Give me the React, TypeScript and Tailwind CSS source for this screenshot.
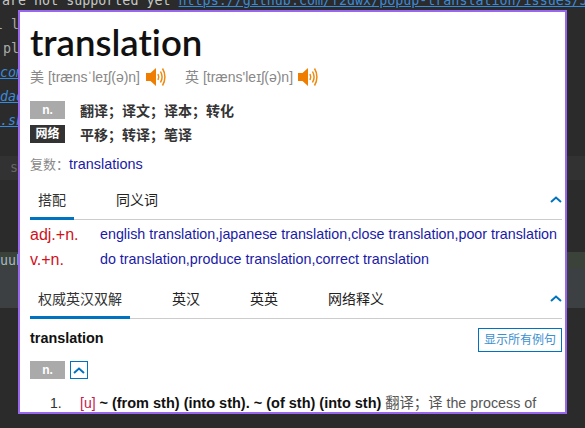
import { useState } from "react";

const sans = "font-['Liberation_Sans','Noto_Sans_CJK_SC',sans-serif]";

function Speaker() {
  return (
    <svg width="20" height="20" viewBox="0 0 20 20" className="shrink-0">
      <path d="M0 6h4.500L10 1v18l-5.500-5H0z" fill="#ee7d00" />
      <g fill="none" stroke="#ee8a10" strokeWidth="1.500">
        <path d="M12 7c1 2 1 4 0 6" />
        <path d="M14.500 4.500c1.900 3.300 1.900 7.700 0 11" />
        <path d="M16.500 1.500c3.200 5 3.200 12 0 17" />
      </g>
    </svg>
  );
}

function Chevron({ raised }: { raised?: boolean }) {
  return (
    <svg width="12" height="7" viewBox="0 0 12 7" className={raised ? "mb-[4px]" : ""}>
      <path d="M1 6l5-4.500L11 6" fill="none" stroke="#0073c0" strokeWidth="2" />
    </svg>
  );
}

function Tabs({ items, active }: { items: string[]; active: number }) {
  return (
    <div className="flex items-center justify-between border-b border-[#ccc] h-[36px]">
      <div className="flex gap-[34px] h-full">
        {items.map((tab, i) => (
          <div
            key={tab}
            className={
              i === active
                ? "px-2 h-[36px] leading-[32px] border-b-[3px] border-[#0073c0] text-[#333]"
                : "px-2 h-[36px] leading-[32px] text-[#222]"
            }
          >
            {tab}
          </div>
        ))}
      </div>
      <Chevron raised />
    </div>
  );
}

function Background() {
  const mono = "font-['DejaVu_Sans_Mono',monospace] text-[13.33px] whitespace-nowrap";
  const link = "italic text-[#3b8ad6] underline";
  return (
    <div className={`h-[428px] overflow-hidden bg-[#2b2b2b] ${mono}`}>
      <div className="mt-[-11px] h-[24px] leading-[24px] pl-[2px] text-[#c5c8c6]">
        are not supported yet{" "}
        <span className="text-[#3b8ad6] underline">
          https://github.com/f2dwx/popup-translation/issues/J
        </span>
      </div>
      <div className="h-[24px] leading-[24px] text-[#aaa] ml-[-5px]">l l</div>
      <div className="h-[24px] leading-[24px] text-[#aaa] pl-[3px]">pl</div>
      <div className={`h-[24px] leading-[24px] ${link}`}>com</div>
      <div className={`h-[24px] leading-[24px] ${link}`}>dao</div>
      <div className={`h-[24px] leading-[24px] ${link}`}>.sh</div>
      <div className="h-[23px]" />
      <div className="h-[24px] leading-[24px] bg-[#323232] text-[#666] pl-[10px]">s</div>
      <div className="h-[72px]" />
      <div className="h-[16px] leading-[18px] bg-[#3a4239] text-[#a9b7c6]">uuh</div>
      <div className="h-[40px] bg-[#3c4043]" />
    </div>
  );
}

export default function App() {
  const [tab] = useState(0);

  return (
    <div className="relative h-[428px] w-[585px] overflow-hidden">
      <Background />
      <div
        className={`absolute left-[18px] top-[10px] w-[549px] h-[404px] overflow-hidden border-2 border-[#9966ee] bg-white pl-[10px] pr-[3px] text-[14px] text-[#333] ${sans}`}
      >
        <h1 className="font-['Lato',sans-serif] font-semibold [font-variant-ligatures:none] text-[36.6px] leading-[40px] mt-[10px] text-[#111]">
          translation
        </h1>
        <div className="flex items-center h-[20px] mt-[5px] text-[#888]">
          <span>美 [trænsˈleɪʃ(ə)n]</span>
          <span className="ml-[6px] flex"><Speaker /></span>
          <span className="ml-[19px]">英 [træns'leɪʃ(ə)n]</span>
          <span className="ml-[5px] flex"><Speaker /></span>
        </div>

        <div className="mt-[14px] flex items-center h-[18px]">
          <span className="w-[35px] h-[18px] bg-[#aaa] text-white text-[12px] font-bold leading-[18px] text-center">n.</span>
          <span className="ml-[15px] pt-[2px] font-bold">翻译；译文；译本；转化</span>
        </div>
        <div className="mt-[6px] flex items-center h-[18px]">
          <span className="w-[35px] h-[18px] bg-[#333] text-white text-[12px] font-bold leading-[18px] text-center">网络</span>
          <span className="ml-[15px] pt-[2px] font-bold">平移；转译；笔译</span>
        </div>
        <div className="mt-[11px] h-[20px] leading-[20px] text-[#888] text-[13px]">
          复数：<span className="text-[#1a1aa6] text-[14.4px]">translations</span>
        </div>

        <div className="mt-[10px]">
          <Tabs items={["搭配", "同义词"]} active={tab} />
        </div>
        <div className="flex mt-[3px] h-[25px] leading-[23px]">
          <span className="w-[70px] text-[16px] text-[#d0111b]">adj.+n.</span>
          <span className="text-[#1a1aa6] text-[14.3px] whitespace-nowrap">
            english translation,japanese translation,close translation,poor translation
          </span>
        </div>
        <div className="flex h-[25px] leading-[23px]">
          <span className="w-[70px] text-[16px] text-[#d0111b]">v.+n.</span>
          <span className="text-[#1a1aa6] text-[14.3px] whitespace-nowrap">
            do translation,produce translation,correct translation
          </span>
        </div>

        <div className="mt-[10px]">
          <Tabs items={["权威英汉双解", "英汉", "英英", "网络释义"]} active={0} />
        </div>

        <div className="flex items-start justify-between mt-[9px] h-[24px]">
          <span className="font-bold text-[#111] text-[14.4px] leading-[20px]">translation</span>
          <span className="w-[84px] h-[24px] border border-[#0073c0] text-[#3a8fd0] text-[12px] leading-[22px] text-center">
            显示所有例句
          </span>
        </div>
        <div className="flex gap-[5px] mt-[9px]">
          <span className="w-[35px] h-[18px] bg-[#aaa] text-white text-[12px] font-bold leading-[18px] text-center">n.</span>
          <span className="w-[18px] h-[18px] border border-[#0073c0] flex items-center justify-center">
            <Chevron />
          </span>
        </div>
        <div className="flex mt-[14px] leading-[20px] whitespace-nowrap">
          <span className="w-[50px] pl-[20px]">1.</span>
          <span>
            <span className="text-[#c9184a]">[u]</span>{" "}
            <b className="text-[#111] text-[14.5px]">~ (from sth) (into sth). ~ (of sth) (into sth)</b>{" "}
            <span className="text-[#555] text-[14.3px]">翻译；译 the process of</span>
          </span>
        </div>
      </div>
    </div>
  );
}
